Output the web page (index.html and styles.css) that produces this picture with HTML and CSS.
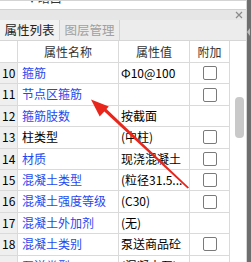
FILE: index.html
```html
<!DOCTYPE html>
<html lang="zh-CN">
<head>
  <meta charset="UTF-8">
  <meta name="viewport" content="width=device-width, initial-scale=1.0">
  <title>属性列表</title>
  <link rel="stylesheet" href="styles.css">
</head>
<body>

  <div class="window">
    <div class="panel">
      <div class="prev"><span class="prev-text">▾ 暗口</span></div>
      <div class="panel-head">
        <svg class="close" width="8" height="8" viewBox="0 0 8 8">
          <path d="M1 1L7 7M7 1L1 7" stroke="#8a8a8a" stroke-width="1.2"/>
        </svg>
      </div>
      <div class="tabs">
        <div class="tab active">属性列表</div>
        <div class="tab">图层管理</div>
      </div>

      <div class="grid-area">
        <div class="props">
          <div class="row head">
            <div class="cell num"></div>
            <div class="cell name">属性名称</div>
            <div class="cell value">属性值</div>
            <div class="cell extra">附加</div>
          </div>
          <div class="row">
            <div class="cell num">10</div>
            <div class="cell name blue">箍筋</div>
            <div class="cell value">Φ10@100</div>
            <div class="cell extra"><span class="check"></span></div>
          </div>
          <div class="row">
            <div class="cell num">11</div>
            <div class="cell name blue">节点区箍筋</div>
            <div class="cell value"></div>
            <div class="cell extra"><span class="check"></span></div>
          </div>
          <div class="row">
            <div class="cell num">12</div>
            <div class="cell name blue">箍筋肢数</div>
            <div class="cell value">按截面</div>
            <div class="cell extra"></div>
          </div>
          <div class="row">
            <div class="cell num">13</div>
            <div class="cell name">柱类型</div>
            <div class="cell value">(中柱)</div>
            <div class="cell extra"><span class="check"></span></div>
          </div>
          <div class="row">
            <div class="cell num">14</div>
            <div class="cell name blue">材质</div>
            <div class="cell value">现浇混凝土</div>
            <div class="cell extra"><span class="check"></span></div>
          </div>
          <div class="row">
            <div class="cell num">15</div>
            <div class="cell name blue">混凝土类型</div>
            <div class="cell value">(粒径31.5...</div>
            <div class="cell extra"><span class="check"></span></div>
          </div>
          <div class="row">
            <div class="cell num">16</div>
            <div class="cell name blue">混凝土强度等级</div>
            <div class="cell value">(C30)</div>
            <div class="cell extra"><span class="check"></span></div>
          </div>
          <div class="row">
            <div class="cell num">17</div>
            <div class="cell name blue">混凝土外加剂</div>
            <div class="cell value">(无)</div>
            <div class="cell extra"></div>
          </div>
          <div class="row">
            <div class="cell num">18</div>
            <div class="cell name blue">混凝土类别</div>
            <div class="cell value">泵送商品砼</div>
            <div class="cell extra"><span class="check"></span></div>
          </div>
          <div class="row">
            <div class="cell num">19</div>
            <div class="cell name blue">泵送类型</div>
            <div class="cell value">(混凝土泵)</div>
            <div class="cell extra"></div>
          </div>
        </div>

        <div class="scroll"><div class="thumb"></div></div>
      </div>
    </div>

    <div class="edge"><span class="notch"></span></div>

    <!-- 标注箭头 -->
    <svg class="arrow" width="251" height="262" viewBox="0 0 251 262">
      <polygon points="101.9,109.2 104.1,106.8 189,187.4 187.6,188.6" fill="#e8261c"/>
      <polygon points="91,99.5 108.8,106.4 99.7,116.6" fill="#e8261c"/>
    </svg>
  </div>

</body>
</html>
```

FILE: styles.css
```css
body {
  margin: 0;
  background-color: #fff;
  font-family: "Noto Sans CJK SC", "Microsoft YaHei", sans-serif;
  font-size: 12px;
  color: #000;
}

.window {
  position: relative;
  display: flex;
  width: 251px;
  height: 262px;
  overflow: hidden;
}

.panel {
  width: 246px;
  display: flex;
  flex-direction: column;
  border-right: 1px solid #d6d6d6;
}

.prev {
  height: 9px;
  flex-shrink: 0;
  overflow: hidden;
  border-top: 1px solid #d4d4d4;
  box-sizing: border-box;
}

.prev-text {
  display: block;
  margin-top: -10px;
  padding-left: 29px;
  line-height: 14px;
  color: #333;
}

.panel-head {
  height: 11px;
  flex-shrink: 0;
  background-color: #e6e6e6;
  border-top: 1px solid #d2d2d2;
  box-sizing: border-box;
  display: flex;
  justify-content: flex-end;
  align-items: center;
}

.close {
  display: block;
  margin-right: 3px;
}

.tabs {
  height: 21px;
  flex-shrink: 0;
  display: flex;
  background-color: #ececec;
  border-bottom: 1px solid #d6d6d6;
  box-sizing: border-box;
}

.tab {
  width: 59px;
  line-height: 20px;
  text-align: center;
  font-size: 12.5px;
  color: #a0a0a0;
  background-color: #ececec;
  border-right: 1px solid #d4d4d4;
}

.tab.active {
  color: #222;
  background-color: #f2f2f2;
}

.grid-area {
  display: flex;
  flex: 1;
}

.props {
  width: 230px;
}

.row {
  display: grid;
  grid-template-columns: 18px 101px 71px 40px;
  height: 21.4px;
  line-height: 20px;
}

.row.head {
  height: 22px;
  line-height: 21px;
  color: #333;
}

.cell {
  border-right: 1px solid #dadada;
  border-bottom: 1px solid #dadada;
  box-sizing: border-box;
  white-space: nowrap;
  overflow: hidden;
}

.num {
  background-color: #efefef;
  padding-left: 2px;
}

.head .num {
  background-color: #fff;
}

.name {
  padding-left: 4px;
}

.value {
  padding-left: 2px;
}

.head .name,
.head .value,
.head .extra {
  text-align: center;
  padding-left: 0;
}

.blue {
  color: #1f48f0;
}

.extra {
  display: flex;
  justify-content: center;
  align-items: center;
}

.check {
  width: 14px;
  height: 14px;
  border: 1px solid #7a7a7a;
  border-radius: 2px;
  box-sizing: border-box;
  background-color: #fff;
}

.scroll {
  flex: 1;
  padding-top: 56px;
  padding-left: 5px;
  background-color: #fff;
}

.thumb {
  width: 9px;
  height: 41px;
  border-radius: 4px;
  background-color: #c9c9c9;
}

.edge {
  width: 4px;
  background-color: #6e6e6e;
  position: relative;
}

.notch {
  position: absolute;
  top: 28px;
  left: 0;
  border-top: 4px solid transparent;
  border-bottom: 4px solid transparent;
  border-right: 3px solid #bdbdbd;
}

.arrow {
  position: absolute;
  top: 0;
  left: 0;
  pointer-events: none;
}
```
